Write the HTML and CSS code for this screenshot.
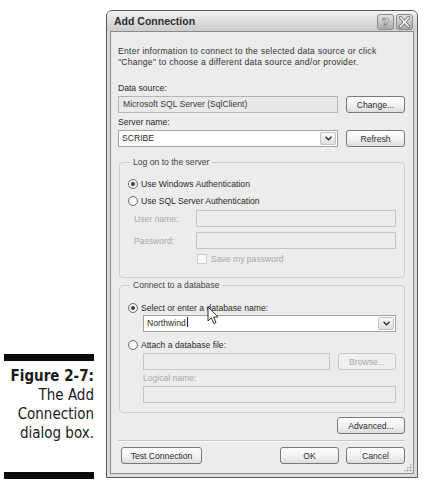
FILE: index.html
```html
<!DOCTYPE html>
<html lang="en">
<head>
    <meta charset="UTF-8">
    <meta name="viewport" content="width=device-width, initial-scale=1.0">
    <title>Add Connection</title>
    <link rel="stylesheet" href="styles.css">
</head>
<body>
    <div class="page">
        <div class="caption">
            <div class="caption-bar"></div>
            <div class="caption-text">
                <strong>Figure 2-7:</strong>
                The Add<br>Connection<br>dialog box.
            </div>
            <div class="caption-bar bottom"></div>
        </div>

        <div class="dialog">
            <div class="title-bar">
                <span class="title">Add Connection</span>
                <div class="title-buttons">
                    <span class="tb-button">
                        <svg width="15" height="14" viewBox="0 0 15 14">
                            <text x="7.5" y="11.5" text-anchor="middle" class="tb-glyph">?</text>
                        </svg>
                    </span>
                    <span class="tb-button">
                        <svg width="15" height="14" viewBox="0 0 15 14">
                            <path d="M3.5 2.5 L11.5 11.5 M11.5 2.5 L3.5 11.5" stroke="#6a6a6a" stroke-width="3.2" stroke-linecap="round"/>
                            <path d="M3.5 2.5 L11.5 11.5 M11.5 2.5 L3.5 11.5" stroke="#fafafa" stroke-width="1.6" stroke-linecap="round"/>
                        </svg>
                    </span>
                </div>
            </div>

            <div class="client">
                <p class="intro">Enter information to connect to the selected data source or click<br>"Change" to choose a different data source and/or provider.</p>

                <div class="label">Data source:</div>
                <div class="row">
                    <div class="textbox readonly">Microsoft SQL Server (SqlClient)</div>
                    <button class="btn side">Change...</button>
                </div>

                <div class="label">Server name:</div>
                <div class="row">
                    <div class="combo">
                        <span class="combo-text">SCRIBE</span>
                        <span class="combo-arrow">
                            <svg width="7" height="5" viewBox="0 0 7 5"><path d="M0.5 0.8 L3.5 3.8 L6.5 0.8" fill="none" stroke="#333" stroke-width="1.5"/></svg>
                        </span>
                    </div>
                    <button class="btn side">Refresh</button>
                </div>

                <fieldset class="group logon">
                    <legend>Log on to the server</legend>
                    <div class="radio-row">
                        <span class="radio checked"></span>
                        <span>Use Windows Authentication</span>
                    </div>
                    <div class="radio-row second">
                        <span class="radio"></span>
                        <span>Use SQL Server Authentication</span>
                    </div>
                    <div class="field-row">
                        <span class="field-label disabled">User name:</span>
                        <div class="textbox disabled-box"></div>
                    </div>
                    <div class="field-row">
                        <span class="field-label disabled">Password:</span>
                        <div class="textbox disabled-box"></div>
                    </div>
                    <div class="check-row">
                        <span class="checkbox"></span>
                        <span class="disabled">Save my password</span>
                    </div>
                </fieldset>

                <fieldset class="group database">
                    <legend>Connect to a database</legend>
                    <div class="radio-row">
                        <span class="radio checked"></span>
                        <span>Select or enter a database name:</span>
                    </div>
                    <div class="combo indent">
                        <span class="combo-text">Northwind<span class="caret"></span></span>
                        <span class="combo-arrow">
                            <svg width="7" height="5" viewBox="0 0 7 5"><path d="M0.5 0.8 L3.5 3.8 L6.5 0.8" fill="none" stroke="#333" stroke-width="1.5"/></svg>
                        </span>
                    </div>
                    <div class="radio-row attach">
                        <span class="radio"></span>
                        <span>Attach a database file:</span>
                    </div>
                    <div class="row indent file-row">
                        <div class="textbox disabled-box"></div>
                        <button class="btn browse" disabled>Browse...</button>
                    </div>
                    <div class="label indent disabled">Logical name:</div>
                    <div class="textbox disabled-box indent logical"></div>
                    <svg class="pointer" width="12" height="19" viewBox="0 0 12 19">
                        <path d="M1 1 L1 15 L4.3 11.8 L6.8 17.6 L9 16.6 L6.6 11 L11 11 Z" fill="#fff" stroke="#333" stroke-width="1" stroke-linejoin="round"/>
                    </svg>
                </fieldset>

                <div class="advanced-row">
                    <button class="btn advanced">Advanced...</button>
                </div>

                <div class="separator"></div>

                <div class="footer">
                    <button class="btn test">Test Connection</button>
                    <div class="footer-right">
                        <button class="btn">OK</button>
                        <button class="btn">Cancel</button>
                    </div>
                </div>
                <span class="grip"></span>
            </div>
        </div>
    </div>
</body>
</html>
```

FILE: styles.css
```css
/* Page with a figure caption on the left and the dialog on the right */
body {
    margin: 0;
    background: #fff;
    font-family: 'Liberation Sans', Arial, sans-serif;
}

.page {
    display: flex;
    height: 483px;
}

.caption {
    width: 106px;
    padding-top: 354px;
    box-sizing: border-box;
}

.caption-bar {
    width: 90px;
    height: 7px;
    margin-left: 4px;
    background: #0a0a0a;
}

.caption-bar.bottom {
    margin-top: 29px;
}

.caption-text {
    width: 94px;
    margin-top: 6px;
    text-align: right;
    font-family: 'Liberation Sans Narrow', 'DejaVu Sans Condensed', sans-serif;
    font-stretch: condensed;
    font-size: 15px;
    line-height: 19px;
    color: #1a1a1a;
}

.caption-text strong {
    display: block;
}

/* Dialog window */
.dialog {
    margin-top: 10px;
    width: 312px;
    height: 468px;
    box-sizing: border-box;
    border: 1px solid #5a5a5a;
    border-radius: 6px 6px 0 0;
    background: #dcdcdc;
    padding: 0 3px 3px;
    display: flex;
    flex-direction: column;
}

.title-bar {
    height: 20px;
    display: flex;
    align-items: center;
    justify-content: space-between;
    background: linear-gradient(#f2f2f2, #d9d9d9 60%, #cdcdcd);
    margin: 0 -3px;
    padding-left: 7px;
    padding-right: 4px;
    border-radius: 5px 5px 0 0;
}

.title {
    font-size: 10.5px;
    font-weight: bold;
    color: #2e2e2e;
}

.title-buttons {
    display: flex;
    gap: 2px;
    margin-top: 1px;
}

.tb-button {
    display: flex;
    width: 15px;
    height: 14px;
    border: 1px solid #8c8c8c;
    border-radius: 3px;
    background: linear-gradient(#e4e4e4, #a9a9a9);
}

.tb-glyph {
    font-family: 'DejaVu Sans', sans-serif;
    font-weight: bold;
    font-size: 12px;
    fill: #f4f4f4;
    stroke: #6a6a6a;
    stroke-width: 0.6;
}

.client {
    position: relative;
    flex: 1;
    border: 1px solid #8a8a8a;
    background: #ececec;
    padding: 0 8px 0 7px;
    font-size: 8.6px;
    color: #2a2a2a;
}

.intro {
    margin: 14px 0 0;
    line-height: 11px;
    letter-spacing: 0.25px;
    color: #333;
}

.label {
    margin-top: 15px;
    line-height: 11px;
}

.label + .row {
    margin-top: 2px;
}

.row ~ .label {
    margin-top: 4px;
}

.row {
    display: flex;
    gap: 8px;
    margin-top: 4px;
}

.textbox {
    flex: 1;
    height: 17px;
    box-sizing: border-box;
    border: 1px solid #a9a9a9;
    background: #fff;
    padding: 0 4px;
    line-height: 15px;
}

.textbox.readonly {
    background: #e9e9e9;
    border-color: #b5b5b5;
    color: #3a3a3a;
}

.disabled-box {
    background: #ececec;
    border-color: #c4c4c4;
}

.combo {
    flex: 1;
    display: flex;
    height: 17px;
    box-sizing: border-box;
    border: 1px solid #a2a2a2;
    background: #fff;
}

.combo-text {
    flex: 1;
    padding-left: 3px;
    line-height: 15px;
}

.combo-arrow {
    width: 14px;
    display: flex;
    align-items: center;
    justify-content: center;
    margin: 1px;
    border: 1px solid #c2c2c2;
    border-radius: 2px;
    background: linear-gradient(#fafafa, #dedede);
}

.caret {
    display: inline-block;
    width: 1px;
    height: 10px;
    margin-left: 1px;
    vertical-align: -1px;
    background: #222;
}

.btn {
    height: 17px;
    padding: 0;
    box-sizing: border-box;
    border: 1px solid #7a7a7a;
    border-radius: 3px;
    background: linear-gradient(#ffffff, #f0f0f0 60%, #dcdcdc);
    font-family: inherit;
    font-size: 8.6px;
    color: #2a2a2a;
}

.btn.side {
    width: 59px;
}

/* Group boxes */
.group {
    position: relative;
    margin: 10px 0 0 1px;
    padding: 9px 8px 13px 8px;
    border: 1px solid #cdcdcd;
    border-radius: 4px;
    min-width: 0;
}

.group legend {
    padding: 0 3px;
    margin-left: 2px;
    line-height: 11px;
    color: #444;
}

.radio-row {
    display: flex;
    align-items: center;
    gap: 3px;
    height: 13px;
}

.radio-row.second {
    margin-top: 4px;
}

.radio {
    width: 10px;
    height: 10px;
    box-sizing: border-box;
    border: 1px solid #6e6e6e;
    border-radius: 50%;
    background: radial-gradient(#ffffff, #e8e8e8);
    display: flex;
    align-items: center;
    justify-content: center;
}

.radio.checked::after {
    content: "";
    width: 4px;
    height: 4px;
    border-radius: 50%;
    background: #3c3c3c;
}

.field-row {
    display: flex;
    align-items: center;
    margin-top: 3px;
}

.field-row + .field-row {
    margin-top: 5px;
}

.field-label {
    width: 68px;
    padding-left: 6px;
    box-sizing: border-box;
}

.disabled {
    color: #a8a8a8;
}

.check-row {
    display: flex;
    align-items: center;
    gap: 4px;
    margin: 4px 0 0 69px;
    height: 11px;
}

.checkbox {
    width: 10px;
    height: 10px;
    box-sizing: border-box;
    border: 1px solid #cfcfcf;
    background: #fafafa;
}

.group.database {
    margin-top: 2px;
    padding-top: 10px;
    padding-bottom: 9px;
}

.indent {
    margin-left: 15px;
}

.combo.indent {
    margin-top: 1px;
}

.radio-row.attach {
    margin-top: 6px;
}

.file-row {
    margin-top: 2px;
}

.btn.browse {
    width: 58px;
    border-color: #c6c6c6;
    background: #efefef;
    color: #a8a8a8;
}

.label.indent {
    margin-top: 3px;
}

.textbox.logical {
    margin-top: 2px;
    height: 17px;
}

.pointer {
    position: absolute;
    left: 87px;
    top: 15px;
}

.advanced-row {
    display: flex;
    justify-content: flex-end;
    margin-top: 4px;
}

.btn.advanced {
    width: 68px;
}

.separator {
    margin-top: 6px;
    height: 1px;
    background: #c8c8c8;
    border-bottom: 1px solid #fafafa;
}

.footer {
    display: flex;
    justify-content: space-between;
    margin-top: 5px;
    padding-left: 3px;
}

.footer-right {
    display: flex;
    gap: 7px;
}

.footer .btn {
    width: 59px;
}

.footer .btn.test {
    width: 81px;
}

.grip {
    position: absolute;
    right: 1px;
    bottom: 1px;
    width: 9px;
    height: 9px;
    background: radial-gradient(circle, #9a9a9a 0.8px, transparent 1.2px) 0 0 / 3px 3px;
    clip-path: polygon(100% 0, 100% 100%, 0 100%);
}
```
